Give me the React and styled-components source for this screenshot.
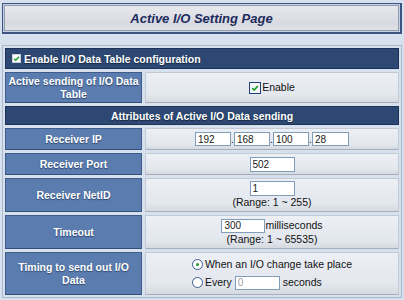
import React from 'react';
import styled, { createGlobalStyle } from 'styled-components';

const GlobalStyle = createGlobalStyle`
  html, body {
    margin: 0;
    padding: 0;
    background: #d7e1ee;
  }
  body {
    font-family: "Liberation Sans", Arial, sans-serif;
    width: 404px;
    height: 300px;
    overflow: hidden;
  }
`;

const Page = styled.div`
  padding: 3px 2px 0;
`;

const TitleBox = styled.div`
  height: 28px;
  border: 1px solid #3d5482;
  box-shadow: inset 0 0 0 1px #c7d1e2, inset 0 0 0 2px #8e9ab2;
  border-right-width: 2px;
  border-bottom-width: 2px;
  background: linear-gradient(#e9eaef, #d9dae1 70%, #e4e5ea);
  display: flex;
  align-items: center;
  justify-content: center;
  color: #1c2b5c;
  font-size: 13px;
  font-weight: bold;
  font-style: italic;
`;

const Table = styled.div`
  margin-top: 11px;
  border: 1px solid #a9b8cf;
  padding: 2px;
  display: flex;
  flex-direction: column;
  gap: 3px;
`;

const HeadRow = styled.div`
  height: ${p => p.h}px;
  box-sizing: border-box;
  background: #2c4873;
  border: 1px solid #1d3256;
  color: #fff;
  font-size: 10.5px;
  font-weight: bold;
  display: flex;
  align-items: center;
  justify-content: ${p => (p.center ? 'center' : 'flex-start')};
  padding-left: ${p => (p.center ? 0 : 6)}px;
  gap: 3px;
  text-shadow: 0 1px 1px rgba(0, 0, 0, 0.5);
`;

const Row = styled.div`
  height: ${p => p.h}px;
  display: grid;
  grid-template-columns: 137px 1fr;
  gap: 3px;
`;

const Label = styled.div`
  box-sizing: border-box;
  background: #5a7cae;
  border: 1px solid #3e5c8c;
  border-bottom-color: #334f7c;
  color: #fff;
  font-size: 10.5px;
  font-weight: bold;
  line-height: 13px;
  text-align: center;
  display: flex;
  align-items: center;
  justify-content: center;
  text-shadow: 0 1px 1px rgba(20, 30, 60, 0.6);
`;

const Value = styled.div`
  box-sizing: border-box;
  background: linear-gradient(#eceff4, #e3e7ee 75%, #d5d9e0);
  border: 1px solid #c2cad6;
  border-bottom-color: #a8afba;
  font-size: 10.5px;
  color: #111;
  display: flex;
  flex-direction: column;
  align-items: center;
  justify-content: center;
  line-height: 13px;
`;

const Line = styled.div`
  display: flex;
  align-items: center;
  gap: ${p => p.gap || 0}px;
`;

const Block = styled.div`
  display: flex;
  flex-direction: column;
  align-items: flex-start;
  gap: 5px;
`;

const Input = styled.input`
  box-sizing: border-box;
  width: ${p => p.w}px;
  height: ${p => p.h || 14}px;
  border: 1px solid #7f9db9;
  background: #fff;
  font-family: "Liberation Sans", Arial, sans-serif;
  font-size: 10px;
  color: ${p => (p.disabled ? '#a0a0a0' : '#1a1a1a')};
  padding: 0 2px;
  margin: 0;
  outline: none;
`;

const Dot = styled.span`
  width: 3px;
  text-align: center;
  font-size: 10px;
`;

const SmallBox = styled.span`
  width: 7px;
  height: 7px;
  background: #fff;
  border: 1px solid #c8d0dc;
  display: inline-flex;
  align-items: center;
  justify-content: center;
`;

const BigBox = styled.span`
  width: 10px;
  height: 10px;
  background: #f4f6fa;
  border: 1px solid #1f3f7c;
  display: inline-flex;
  align-items: center;
  justify-content: center;
  margin-right: 1px;
`;

const Radio = styled.span`
  width: 9px;
  height: 9px;
  border-radius: 50%;
  border: 1px solid #3d5a8a;
  background: #fff;
  display: inline-flex;
  align-items: center;
  justify-content: center;
  margin-right: 2px;

  &::after {
    content: '';
    width: 3px;
    height: 3px;
    border-radius: 50%;
    background: ${p => (p.on ? '#1f9d2a' : 'transparent')};
  }
`;

const Check = ({ size }) => (
  <svg width={size} height={size} viewBox="0 0 10 10">
    <path d="M1.5 5.2 L4 7.6 L8.6 2.4" fill="none" stroke="#1f9d2a" strokeWidth="2" />
  </svg>
);

export default function App() {
  return (
    <Page>
      <GlobalStyle />
      <TitleBox>Active I/O Setting Page</TitleBox>
      <Table>
        <HeadRow h={21}>
          <SmallBox><Check size={7} /></SmallBox>
          Enable I/O Data Table configuration
        </HeadRow>
        <Row h={31}>
          <Label>Active sending of I/O Data<br />Table</Label>
          <Value>
            <Line>
              <BigBox><Check size={8} /></BigBox>Enable
            </Line>
          </Value>
        </Row>
        <HeadRow h={19} center>Attributes of Active I/O Data sending</HeadRow>
        <Row h={22}>
          <Label>Receiver IP</Label>
          <Value>
            <Line>
              <Input w={36} defaultValue="192" />
              <Dot>.</Dot>
              <Input w={36} defaultValue="168" />
              <Dot>.</Dot>
              <Input w={36} defaultValue="100" />
              <Dot>.</Dot>
              <Input w={37} defaultValue="28" />
            </Line>
          </Value>
        </Row>
        <Row h={22}>
          <Label>Receiver Port</Label>
          <Value>
            <Input w={45} h={15} defaultValue="502" />
          </Value>
        </Row>
        <Row h={34}>
          <Label>Receiver NetID</Label>
          <Value>
            <Input w={45} h={15} defaultValue="1" />
            <span>(Range: 1 ~ 255)</span>
          </Value>
        </Row>
        <Row h={34}>
          <Label>Timeout</Label>
          <Value>
            <Line>
              <Input w={44} h={14} defaultValue="300" />
              <span>milliseconds</span>
            </Line>
            <span>(Range: 1 ~ 65535)</span>
          </Value>
        </Row>
        <Row h={43}>
          <Label>Timing to send out I/O<br />Data</Label>
          <Value>
            <Block>
              <Line><Radio on />When an I/O change take place</Line>
              <Line>
                <Radio />Every&nbsp;
                <Input w={45} h={14} defaultValue="0" disabled />
                &nbsp;seconds
              </Line>
            </Block>
          </Value>
        </Row>
      </Table>
    </Page>
  );
}
